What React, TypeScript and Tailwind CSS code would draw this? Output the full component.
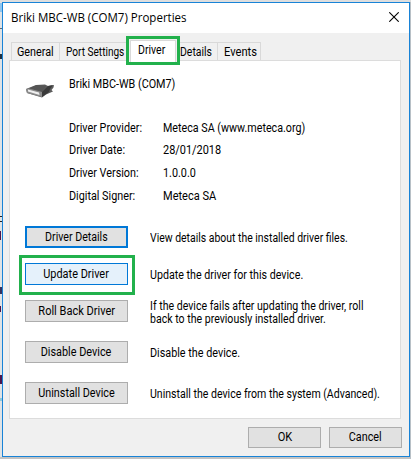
import React from "react";

const details = [
  { label: "Driver Provider:", ls: "scale-x-[.9]", value: "Meteca SA (www.meteca.org)", vs: "scale-x-[.893]", h: "h-[22px]" },
  { label: "Driver Date:", ls: "scale-x-[.91]", value: "28/01/2018", vs: "scale-x-[.91]", h: "h-[23px]" },
  { label: "Driver Version:", ls: "scale-x-[.9]", value: "1.0.0.0", vs: "scale-x-[.9]", h: "h-[23px]" },
  { label: "Digital Signer:", ls: "scale-x-[.9]", value: "Meteca SA", vs: "scale-x-[.92]", h: "h-[23px]" },
];

function T({ children, className = "" }: { children: React.ReactNode; className?: string }) {
  return <span className={"inline-block " + className}>{children}</span>;
}

function Btn({ children, fit, className = "border border-[#adadad] bg-[#e1e1e1]" }: { children: React.ReactNode; fit: string; className?: string }) {
  return (
    <button className={"flex h-[22px] w-[103px] shrink-0 items-center justify-center pb-px leading-[14px] " + className}>
      <T className={fit}>{children}</T>
    </button>
  );
}

export default function App() {
  return (
    <div className="relative h-[459px] w-[411px] overflow-hidden bg-[#dfe3e6] pt-[2px] pl-[2px] font-['Roboto',sans-serif] text-[12px] font-normal whitespace-nowrap text-black">
      <div className="absolute top-0 left-0 h-[2px] w-full bg-[#dedede]" />
      <div className="absolute top-[3px] left-0 h-[9px] w-[2px] bg-[#8ec5ef]" />
      <div className="absolute top-[28px] left-0 h-px w-full bg-[#606870]" />
      <div className="absolute top-[54px] left-0 h-[5px] w-[2px] bg-[#203040]" />
      <div className="absolute top-[216px] left-0 h-px w-[2px] bg-[#222]" />
      <div className="absolute top-[221px] left-0 h-px w-[2px] bg-[#222]" />
      <div className="absolute top-[231px] left-0 h-[9px] w-px bg-[#4b164d]" />
      <div className="absolute top-[287px] left-0 h-[7px] w-[2px] bg-[#36325e]" />
      <div className="absolute top-[306px] left-0 h-[6px] w-px bg-[#4b164d]" />
      <div className="absolute top-[375px] left-0 h-[9px] w-[2px] bg-[#4b164d]" />
      <div className="absolute top-[398px] left-0 h-[3px] w-[2px] bg-[#8fc8dc]" />
      <div className="absolute top-[457px] left-0 h-[2px] w-full bg-[#c3c3c3]" />
      <div className="absolute top-[2px] right-0 h-[457px] w-px bg-[#b8c0c6]" />
      <div className="relative flex h-[455px] w-[408px] flex-col border border-[#1883d7] bg-[#f0f0f0]">
        <header className="flex h-[30px] shrink-0 justify-between bg-white pr-[10px] pl-[8px]">
          <h1 className="origin-left scale-x-[.96] pt-[7px] font-['Open_Sans',sans-serif] text-[12px] leading-[16px] font-normal">Briki MBC-WB (COM7) Properties</h1>
          <svg className="mt-[9px]" width="10" height="10" viewBox="0 0 10 10" fill="none" stroke="#000" strokeWidth="1.1"><path d="M.3.3l9.400 9.400M9.700.3L.3 9.700" /></svg>
        </header>
        <nav className="mt-[9px] ml-[8px] flex h-[18px] shrink-0 leading-[19px]">
          <div className="w-[48px] border-t border-l border-[#d9d9d9] pl-[5px]"><T className="origin-left scale-x-[.9]">General</T></div>
          <div className="w-[69px] border-t border-l border-[#d9d9d9] pl-[6px]"><T className="origin-left scale-x-[.84]">Port Settings</T></div>
          <div className="relative -mt-[6px] -mb-[5px] -ml-[2px] h-[29px] w-[54px] shrink-0 border-3 border-[#22b14c] bg-[#f0f0f0] pt-px pl-px">
            <div className="h-[22px] w-[46px] border-x border-t border-[#d9d9d9] bg-white pl-[7px] leading-[19px]"><T className="origin-left scale-x-[.88]">Driver</T></div>
          </div>
          <div className="w-[37px] border-t border-[#d9d9d9]"><T className="origin-left scale-x-[.87]">Details</T></div>
          <div className="w-[44px] border-x border-t border-[#d9d9d9] pl-[6px]"><T className="origin-left scale-x-[.93]">Events</T></div>
        </nav>
        <main className="ml-[6px] h-[359px] w-[392px] shrink-0 border border-[#dcdcdc] bg-white">
          <section className="flex h-[53px] pt-[15px] pl-[16px]">
            <svg className="mt-[7px]" width="28" height="15" viewBox="0 0 28 15">
              <path d="M0 6L10 2l9-.5 3 1.500 6-1-.5 2.500-2 2.500 1.500 1.500-7 3-4 3L1 10z" fill="#5c5c5c" />
              <path d="M5 4.500L11 2l9 1-4 6-13-3z" fill="#555" />
              <path d="M0 6l3-.5 13 3.500v5L1 10z" fill="#8b8b8b" />
              <path d="M2 6.500l11 3 .5 2.500L2 8.500z" fill="#efefef" />
              <path d="M16 9l6-6 5-1-3 4-1 3-7 5z" fill="#3a3a3a" />
            </svg>
            <T className="ml-[15px] origin-left scale-x-[.9] leading-[16px]">Briki MBC-WB (COM7)</T>
          </section>
          <section className="pt-[6px] pl-[59px]">
            {details.map((d) => (
              <div key={d.label} className={"flex leading-[16px] " + d.h}>
                <div className="w-[94px]"><T className={"origin-left " + d.ls}>{d.label}</T></div>
                <div><T className={"origin-left " + d.vs}>{d.value}</T></div>
              </div>
            ))}
          </section>
          <section className="flex flex-col pt-[15px] pl-[15px] leading-[13px]">
            <div className="flex h-[35px] items-start">
              <Btn fit="scale-x-[.885]" className="border-2 border-[#0078d7] bg-[#e1e1e1]">Driver Details</Btn>
              <T className="ml-[22px] origin-left scale-x-[.87] pt-[6px]">View details about the installed driver files.</T>
            </div>
            <div className="-mt-[6px] -ml-[6px] flex h-[40px] items-start">
              <div className="h-[40px] w-[116px] shrink-0 border-3 border-[#22b14c] pt-[5px] pl-[3px]">
                <Btn fit="scale-x-[.91]" className="border border-[#0078d7] bg-[#e5f1fb]">Update Driver</Btn>
              </div>
              <T className="ml-[15px] origin-left scale-x-[.89] pt-[14px]">Update the driver for this device.</T>
            </div>
            <div className="mt-[5px] flex h-[41px] items-start">
              <Btn fit="scale-x-[.92]">Roll Back Driver</Btn>
              <T className="ml-[22px] origin-left scale-x-[.881]">If the device fails after updating the driver, roll<br />back to the previously installed driver.</T>
            </div>
            <div className="flex h-[41px] items-start">
              <Btn fit="scale-x-[.905]">Disable Device</Btn>
              <T className="ml-[22px] origin-left scale-x-[.9] pt-[6px]">Disable the device.</T>
            </div>
            <div className="flex h-[22px] items-start">
              <Btn fit="scale-x-[.9]">Uninstall Device</Btn>
              <T className="ml-[22px] origin-left scale-x-[.88] pt-[6px]">Uninstall the device from the system (Advanced).</T>
            </div>
          </section>
        </main>
        <footer className="mt-[8px] flex justify-end gap-[8px] pr-[7px]">
          <button className="h-[21px] w-[73px] border border-[#adadad] bg-[#e1e1e1] leading-[19px]"><T className="scale-x-[.92]">OK</T></button>
          <button className="h-[21px] w-[73px] border border-[#adadad] bg-[#e1e1e1] leading-[19px]"><T className="scale-x-[.9]">Cancel</T></button>
        </footer>
      </div>
    </div>
  );
}
